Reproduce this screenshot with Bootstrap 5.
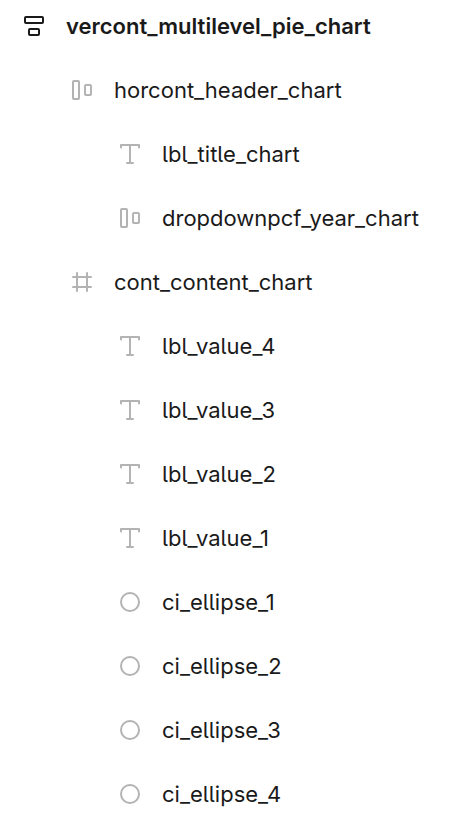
<!DOCTYPE html>
<html lang="en">
<head>
<meta charset="utf-8">
<meta name="viewport" content="width=device-width, initial-scale=1">
<title>Layers</title>
<link href="https://cdn.jsdelivr.net/npm/bootstrap@5.3.0/dist/css/bootstrap.min.css" rel="stylesheet">
<style>
body { font-family: Inter, sans-serif; font-size: 22px; color: #1a1a1a; background: #fff; font-feature-settings: "cv05"; }
.layer-tree ul { padding-left: 48px; }
.layer-row { height: 64px; gap: 16px; line-height: 32px; white-space: nowrap; }
.layer-root { font-weight: 600; font-feature-settings: normal; }
.layer-icon { width: 32px; height: 32px; fill: none; stroke: #b3b3b3; stroke-width: 2; stroke-linecap: round; stroke-linejoin: round; }
.layer-root .layer-icon { stroke: #1a1a1a; }
.layer-tree { margin-top: -6px; padding-left: 18px; }
</style>
<script src="https://cdn.jsdelivr.net/npm/bootstrap@5.3.0/dist/js/bootstrap.bundle.min.js"></script>
</head>
<body>
<svg class="d-none" aria-hidden="true">
<symbol id="i-vert" viewBox="0 0 32 32"><rect x="7" y="7" width="18" height="6" rx="1"/><rect x="11" y="19" width="10" height="6" rx="1"/></symbol>
<symbol id="i-horz" viewBox="0 0 32 32"><rect x="7" y="7" width="6" height="18" rx="1"/><rect x="19" y="11" width="6" height="10" rx="1"/></symbol>
<symbol id="i-text" viewBox="0 0 32 32"><path d="M7 9.500V7H25V9.500M16 7V25M13 25H19"/></symbol>
<symbol id="i-frame" viewBox="0 0 32 32"><path d="M11 7V25M21 7V25M7 11H25M7 21H25"/></symbol>
<symbol id="i-circle" viewBox="0 0 32 32"><circle cx="16" cy="16" r="9"/></symbol>
</svg>
<main class="layer-tree">
<div class="layer-row layer-root d-flex align-items-center"><svg class="layer-icon"><use href="#i-vert"/></svg><span>vercont_multilevel_pie_chart</span></div>
<ul class="list-unstyled mb-0">
<li><div class="layer-row d-flex align-items-center"><svg class="layer-icon"><use href="#i-horz"/></svg><span>horcont_header_chart</span></div>
<ul class="list-unstyled">
<li class="layer-row d-flex align-items-center"><svg class="layer-icon"><use href="#i-text"/></svg><span>lbl_title_chart</span></li>
<li class="layer-row d-flex align-items-center"><svg class="layer-icon"><use href="#i-horz"/></svg><span>dropdownpcf_year_chart</span></li>
</ul></li>
<li><div class="layer-row d-flex align-items-center"><svg class="layer-icon"><use href="#i-frame"/></svg><span>cont_content_chart</span></div>
<ul class="list-unstyled mb-0">
<li class="layer-row d-flex align-items-center"><svg class="layer-icon"><use href="#i-text"/></svg><span>lbl_value_4</span></li>
<li class="layer-row d-flex align-items-center"><svg class="layer-icon"><use href="#i-text"/></svg><span>lbl_value_3</span></li>
<li class="layer-row d-flex align-items-center"><svg class="layer-icon"><use href="#i-text"/></svg><span>lbl_value_2</span></li>
<li class="layer-row d-flex align-items-center"><svg class="layer-icon"><use href="#i-text"/></svg><span>lbl_value_1</span></li>
<li class="layer-row d-flex align-items-center"><svg class="layer-icon"><use href="#i-circle"/></svg><span>ci_ellipse_1</span></li>
<li class="layer-row d-flex align-items-center"><svg class="layer-icon"><use href="#i-circle"/></svg><span>ci_ellipse_2</span></li>
<li class="layer-row d-flex align-items-center"><svg class="layer-icon"><use href="#i-circle"/></svg><span>ci_ellipse_3</span></li>
<li class="layer-row d-flex align-items-center"><svg class="layer-icon"><use href="#i-circle"/></svg><span>ci_ellipse_4</span></li>
</ul></li>
</ul>
</main>
</body>
</html>
